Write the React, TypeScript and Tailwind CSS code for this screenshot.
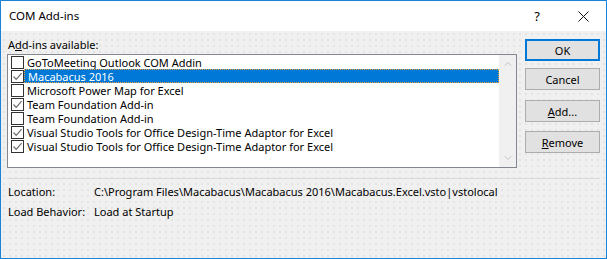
import { ChevronUp, ChevronDown } from 'lucide-react';

const addins = [
  { name: 'GoToMeeting Outlook COM Addin', checked: false },
  { name: 'Macabacus 2016', checked: true, selected: true },
  { name: 'Microsoft Power Map for Excel', checked: false },
  { name: 'Team Foundation Add-in', checked: true },
  { name: 'Team Foundation Add-in', checked: false },
  { name: 'Visual Studio Tools for Office Design-Time Adaptor for Excel', checked: true },
  { name: 'Visual Studio Tools for Office Design-Time Adaptor for Excel', checked: true },
];

function CheckBox({ checked }: { checked: boolean }) {
  return (
    <div className="w-[13px] h-[13px] border border-[#333333] bg-white flex items-center justify-center shrink-0">
      {checked && (
        <svg width="11" height="11" viewBox="0 0 11 11">
          <path d="M1.5 5.5 L4.2 8.3 L9.6 2.2" fill="none" stroke="#6d6d6d" strokeWidth="1.2" />
        </svg>
      )}
    </div>
  );
}

function DialogButton({ children, primary }: { children: React.ReactNode; primary?: boolean }) {
  return (
    <button
      className={
        'w-[75px] h-[22px] bg-[#e1e1e1] flex items-center justify-center text-[11px] text-black ' +
        (primary ? 'border-2 border-[#0078d7]' : 'border border-[#adadad]')
      }
    >
      {children}
    </button>
  );
}

export default function App() {
  return (
    <div className="w-[607px] h-[259px] border border-[#1883d7] bg-[#f0f0f0] bg-[radial-gradient(circle,#dcdcdc_0.6px,transparent_0.9px)] bg-[length:6px_6px] flex flex-col text-[11px] leading-none text-black font-['Segoe_UI','Noto_Sans',sans-serif] overflow-hidden">
      {/* Title bar */}
      <div className="h-[30px] bg-white flex items-center shrink-0 text-[12px]">
        <span className="pl-[8px] flex-1 text-[11.5px]">COM Add-ins</span>
        <span className="w-[46px] text-center text-[13px]">?</span>
        <span className="w-[46px] flex justify-center">
          <svg width="11" height="11" viewBox="0 0 11 11">
            <path d="M0.5 0.5 L10.5 10.5 M10.5 0.5 L0.5 10.5" stroke="#111" strokeWidth="1" />
          </svg>
        </span>
      </div>

      {/* Main area */}
      <div className="flex pl-[6px] pr-[6px] pt-[8px]">
        <div className="w-[510px] flex flex-col">
          <div className="h-[15px] pl-px">
            A<span className="underline">d</span>d-ins available:
          </div>
          <div className="h-[114px] border border-[#828790] bg-white flex">
            <div className="flex-1 flex flex-col">
              {addins.map((a, i) => (
                <div key={i} className="h-[14px] flex items-center pl-[3px]">
                  <CheckBox checked={a.checked} />
                  <div
                    className={
                      'flex-1 h-full flex items-center pl-[3px] ' +
                      (a.selected ? 'bg-[#0078d7] text-white border border-dotted border-[#e9a23b] pl-[2px]' : '')
                    }
                  >
                    {a.name}
                  </div>
                </div>
              ))}
            </div>
            <div className="w-[17px] bg-[#f0f0f0] flex flex-col justify-between items-center py-[3px]">
              <ChevronUp size={12} strokeWidth={2} className="text-[#c2c2c2]" />
              <ChevronDown size={12} strokeWidth={2} className="text-[#c2c2c2]" />
            </div>
          </div>
        </div>
        <div className="flex-1 flex flex-col items-end">
          <DialogButton primary>OK</DialogButton>
          <div className="mt-[7px]">
            <DialogButton>Cancel</DialogButton>
          </div>
          <div className="mt-[10px]">
            <DialogButton>
              <span className="underline">A</span>dd...
            </DialogButton>
          </div>
          <div className="mt-[9px]">
            <DialogButton>
              <span className="underline">R</span>emove
            </DialogButton>
          </div>
        </div>
      </div>

      {/* Separator */}
      <div className="mx-[6px] mt-[10px] h-px bg-[#dadada]" />

      {/* Details */}
      <div className="grid grid-cols-[86px_1fr] gap-y-[8px] pl-[7px] pt-[7px]">
        <span className="h-[12px]">Location:</span>
        <span>C:\Program Files\Macabacus\Macabacus 2016\Macabacus.Excel.vsto|vstolocal</span>
        <span className="h-[12px]">Load Behavior:</span>
        <span>Load at Startup</span>
      </div>
    </div>
  );
}
